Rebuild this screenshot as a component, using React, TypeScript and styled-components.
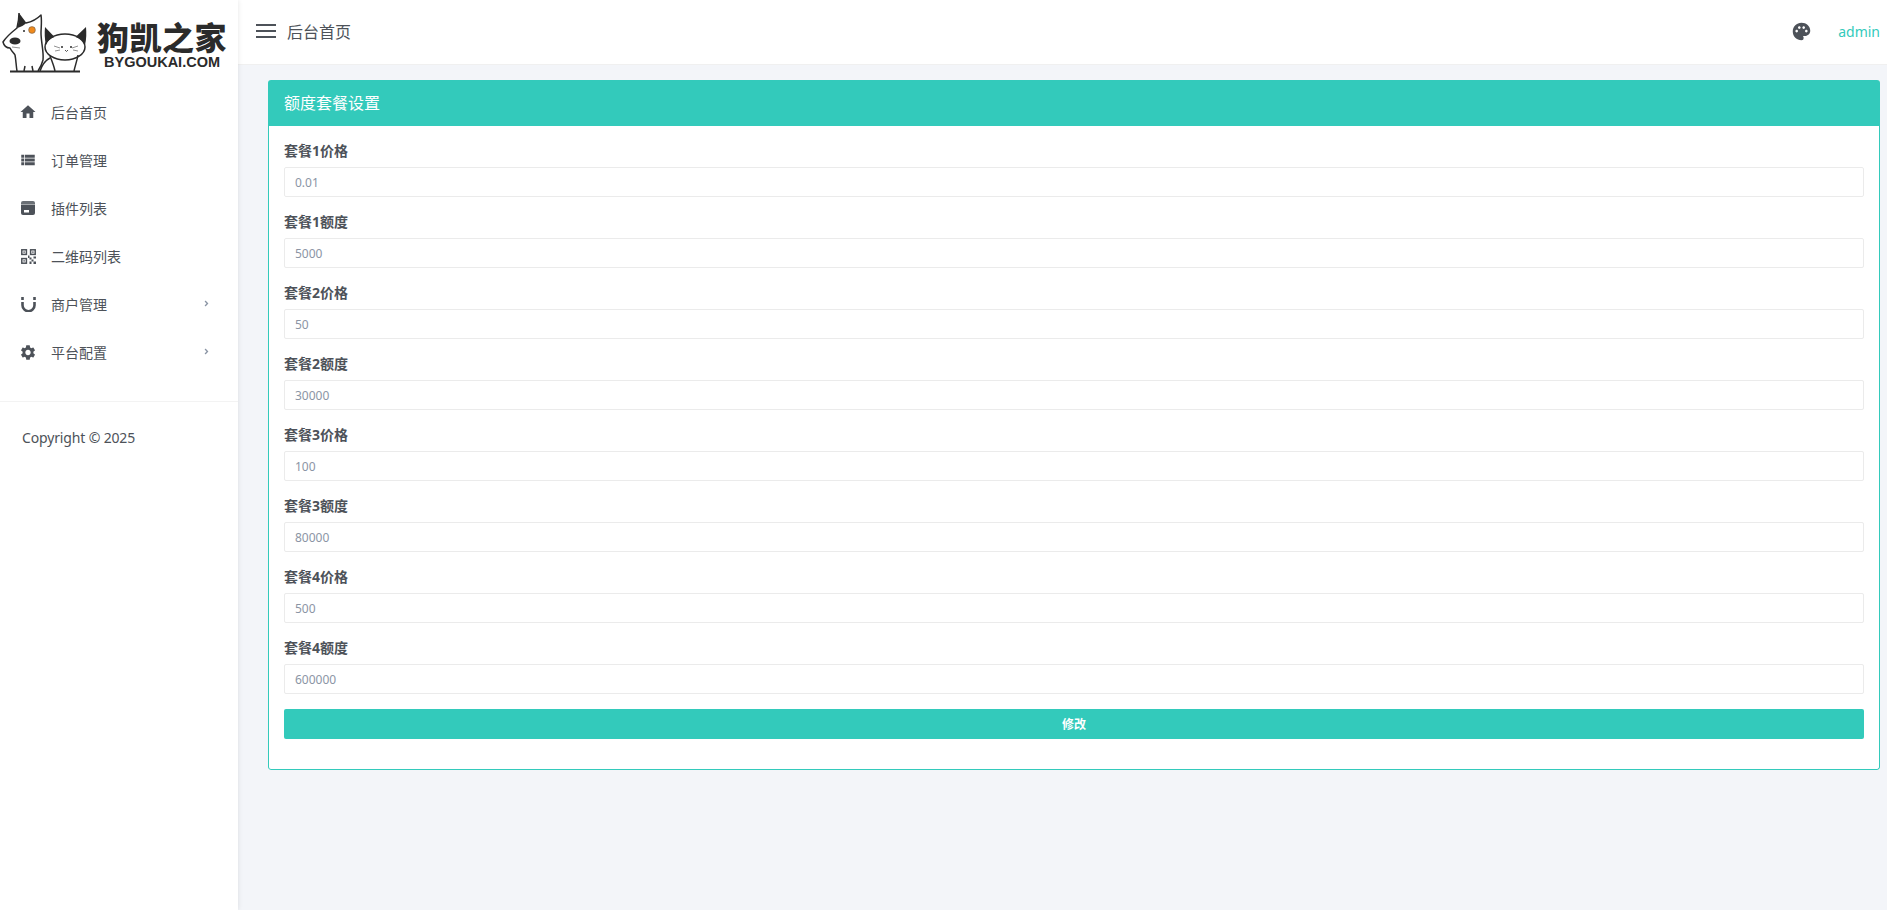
import React from 'react'
import styled, {createGlobalStyle} from 'styled-components'
import {FaAngleRight} from 'react-icons/fa'
import {MdHome, MdPalette, MdSettings, MdViewList} from 'react-icons/md'

const PRIMARY = '#33cabb'
const TEXT = '#4d5259'
const INK = '#2b2b2b'

const fields = [
  {label: '套餐1价格', value: '0.01'},
  {label: '套餐1额度', value: '5000'},
  {label: '套餐2价格', value: '50'},
  {label: '套餐2额度', value: '30000'},
  {label: '套餐3价格', value: '100'},
  {label: '套餐3额度', value: '80000'},
  {label: '套餐4价格', value: '500'},
  {label: '套餐4额度', value: '600000'},
]

function ArchiveIcon() {
  return (
    <svg width="14" height="14" viewBox="0 0 14 14">
      <path d="M2 0h10a2 2 0 0 1 2 2v1H0V2a2 2 0 0 1 2-2z" fill="#6a6f75" />
      <path d="M0 3.6h14V12a2 2 0 0 1-2 2H2a2 2 0 0 1-2-2z" fill={TEXT} />
      <rect x="3" y="9" width="5" height="2.5" fill="#fff" />
    </svg>
  )
}

function QrIcon() {
  return (
    <svg width="15" height="15" viewBox="0 0 15 15" fill="none">
      <g stroke={TEXT} strokeWidth="1.5">
        <rect x="0.8" y="0.8" width="4.6" height="4.6" />
        <rect x="9.6" y="0.8" width="4.6" height="4.6" />
        <rect x="0.8" y="9.6" width="4.6" height="4.6" />
      </g>
      <g fill={TEXT}>
        <rect x="2.4" y="2.4" width="1.4" height="1.4" />
        <rect x="11.2" y="2.4" width="1.4" height="1.4" />
        <rect x="2.4" y="11.2" width="1.4" height="1.4" />
        <rect x="7" y="6.5" width="1.5" height="2.5" />
        <rect x="8.5" y="8.5" width="2" height="2" />
        <rect x="12.5" y="7.5" width="2.5" height="2" />
        <rect x="10.5" y="10.5" width="2" height="2" />
        <rect x="8.5" y="12.5" width="2" height="2.5" />
        <rect x="12.5" y="12.5" width="2.5" height="2.5" />
      </g>
    </svg>
  )
}

function MagnetIcon() {
  return (
    <svg width="15" height="15" viewBox="0 0 15 15" fill="none">
      <path
        d="M1.5 5v3.2a6 6 0 0 0 12 0V5"
        stroke={TEXT}
        strokeWidth="2.6"
      />
      <rect x="0.2" y="0" width="2.6" height="3" fill={TEXT} />
      <rect x="12.2" y="0" width="2.6" height="3" fill={TEXT} />
    </svg>
  )
}

function LogoArt() {
  return (
    <svg width="90" height="76" viewBox="0 0 90 76" fill="none">
      <g stroke={INK} strokeWidth="1.5" strokeLinejoin="round">
        <path d="M26 23 C31 22 37 19 41 15 C42 22 41 28 41 33 C41 42 44 52 43 60 C42 64 40 68 38 71" />
        <path d="M19 13 C19 19 18 24 17 28 C12 32 6 37 3 42 C4 46 7 48 10 48 C12 52 14 53 15 55 C16 60 16 65 17 71" />
        <path d="M24 71 L25 66 M33 71 L32 66" />
        <path d="M50 58 C46 60 42 65 40 71" />
        <ellipse cx="65" cy="47" rx="20" ry="13" fill="#fff" />
        <path d="M50 56 C52 61 54 66 55 71 M78 55 C77 61 75 66 74 71" />
      </g>
      <path d="M19 13 L26.5 23 C24 25 21 27 17.5 28 C18.5 23 19 18 19 13z" fill={INK} />
      <path d="M45 27 L54.5 37 C50 38.5 47.5 41 46 45 C44.5 39 44.5 33 45 27z" fill={INK} />
      <path d="M86 27 C86.5 33 86.5 39 85 45 C83.5 41 80 38.5 75.5 37z" fill={INK} />
      <ellipse cx="15" cy="41" rx="5.5" ry="3.6" fill={INK} />
      <circle cx="32" cy="30" r="3.4" fill="#f08a1c" stroke="#555" strokeWidth="0.5" />
      <circle cx="24" cy="31" r="1" fill={INK} />
      <g stroke="#777" strokeWidth="0.8">
        <path d="M54 46l6 2M55 51l5-1M78 46l-6 2M78 51l-5-1" />
        <path d="M12 47l8 1" />
      </g>
      <circle cx="62" cy="47" r="1" fill={INK} />
      <circle cx="71" cy="47" r="1" fill={INK} />
      <path d="M65 50l1.5 1.5 1.5-1.5" stroke={INK} strokeWidth="0.8" />
      <rect x="10" y="70.5" width="70" height="2" fill={INK} />
    </svg>
  )
}

const menu = [
  {name: '后台首页', icon: <MdHome size={18} />},
  {name: '订单管理', icon: <MdViewList size={18} />},
  {name: '插件列表', icon: <ArchiveIcon />},
  {name: '二维码列表', icon: <QrIcon />},
  {name: '商户管理', icon: <MagnetIcon />, sub: true},
  {name: '平台配置', icon: <MdSettings size={19} />, sub: true},
]

export default function App() {
  return (
    <Page>
      <GlobalStyle />
      <Sidebar>
        <Logo>
          <LogoArt />
          <LogoText>
            <LogoName>狗凯之家</LogoName>
            <LogoUrl>BYGOUKAI.COM</LogoUrl>
          </LogoText>
        </Logo>
        <Menu>
          {menu.map(item => (
            <MenuItem key={item.name}>
              <MenuIcon>{item.icon}</MenuIcon>
              <span>{item.name}</span>
              {item.sub && (
                <Caret>
                  <FaAngleRight size={9} />
                </Caret>
              )}
            </MenuItem>
          ))}
        </Menu>
        <Copyright>Copyright © 2025</Copyright>
      </Sidebar>
      <Main>
        <Topbar>
          <Burger>
            <i />
            <i />
            <i />
          </Burger>
          <PageTitle>后台首页</PageTitle>
          <TopRight>
            <MdPalette size={21} color={TEXT} />
            <UserName>admin</UserName>
          </TopRight>
        </Topbar>
        <Content>
          <Card>
            <CardHead>额度套餐设置</CardHead>
            <CardBody>
              {fields.map(field => (
                <FormGroup key={field.label}>
                  <Label>{field.label}</Label>
                  <Input defaultValue={field.value} />
                </FormGroup>
              ))}
              <SubmitButton type="button">修改</SubmitButton>
            </CardBody>
          </Card>
        </Content>
      </Main>
    </Page>
  )
}

const GlobalStyle = createGlobalStyle`
  html, body {
    margin: 0;
    height: 100%;
    overflow: hidden;
  }
  * {
    box-sizing: border-box;
  }
  body {
    font-family: "Noto Sans", "Noto Sans CJK SC", sans-serif;
    font-size: 14px;
    color: ${TEXT};
  }
`
const Page = styled.div`
  display: grid;
  grid-template-columns: 238px 1fr;
  height: 910px;
  background: #f3f5f9;
`
const Sidebar = styled.aside`
  background: #fff;
  box-shadow: 0 0 5px rgba(0, 0, 0, 0.1);
  z-index: 2;
`
const Logo = styled.div`
  height: 88px;
  display: flex;
  align-items: flex-start;
`
const LogoText = styled.div`
  margin-left: 7px;
  padding-top: 18px;
  display: flex;
  flex-direction: column;
  width: 134px;
`
const LogoName = styled.div`
  font-family: "Noto Sans CJK SC", sans-serif;
  font-weight: 900;
  font-size: 32px;
  line-height: 36px;
  letter-spacing: 0.5px;
  color: ${INK};
  white-space: nowrap;
`
const LogoUrl = styled.div`
  font-family: "Liberation Sans", sans-serif;
  font-weight: 700;
  font-size: 14.5px;
  line-height: 14px;
  margin-top: 1px;
  padding-left: 7px;
  color: ${INK};
`
const Menu = styled.nav`
  display: flex;
  flex-direction: column;
  padding-bottom: 25px;
  border-bottom: 1px solid #f3f3f3;
`
const MenuItem = styled.div`
  height: 48px;
  display: flex;
  align-items: center;
  padding-left: 19px;
  position: relative;
`
const MenuIcon = styled.span`
  width: 18px;
  height: 18px;
  margin-right: 14px;
  display: flex;
  align-items: center;
  justify-content: center;
  color: ${TEXT};
`
const Caret = styled.span`
  position: absolute;
  left: 202px;
  top: 13px;
  color: #8b95a5;
`
const Copyright = styled.div`
  padding: 25px 0 0 22px;
  line-height: 22px;
  letter-spacing: -0.15px;
`
const Main = styled.main`
  display: flex;
  flex-direction: column;
  min-width: 0;
`
const Topbar = styled.header`
  height: 65px;
  background: #fff;
  border-bottom: 1px solid #f0f0f0;
  display: flex;
  align-items: center;
  padding: 0 7px 2px 18px;
`
const Burger = styled.div`
  width: 20px;
  display: flex;
  flex-direction: column;
  gap: 4px;
  margin-right: 11px;

  i {
    display: block;
    height: 2px;
    background: ${TEXT};
  }
`
const PageTitle = styled.div`
  font-size: 16px;
`
const TopRight = styled.div`
  margin-left: auto;
  display: flex;
  align-items: center;
  gap: 26px;
`
const UserName = styled.span`
  color: ${PRIMARY};
`
const Content = styled.div`
  padding: 15px 7px 0 30px;
`
const Card = styled.section`
  border-radius: 3px;
  overflow: hidden;
  background: #fff;
`
const CardHead = styled.div`
  height: 46px;
  background: ${PRIMARY};
  color: #fff;
  font-size: 16px;
  line-height: 46px;
  padding-left: 16px;
`
const CardBody = styled.div`
  padding: 15px 15px 30px;
  border: 1px solid ${PRIMARY};
  border-top: 0;
  border-radius: 0 0 3px 3px;
`
const FormGroup = styled.div`
  margin-bottom: 15px;
`
const Label = styled.label`
  display: block;
  font-weight: 700;
  line-height: 19px;
  padding-bottom: 2px;
  margin-bottom: 5px;
`
const Input = styled.input`
  display: block;
  width: 100%;
  height: 30px;
  padding: 0 10px;
  border: 1px solid #ebebeb;
  border-radius: 2px;
  outline: none;
  font-family: inherit;
  font-size: 12px;
  color: #8b95a5;
`
const SubmitButton = styled.button`
  display: block;
  width: 100%;
  height: 30px;
  border: 0;
  border-radius: 2px;
  background: ${PRIMARY};
  color: #fff;
  font-family: inherit;
  font-size: 12px;
  font-weight: 700;
`
